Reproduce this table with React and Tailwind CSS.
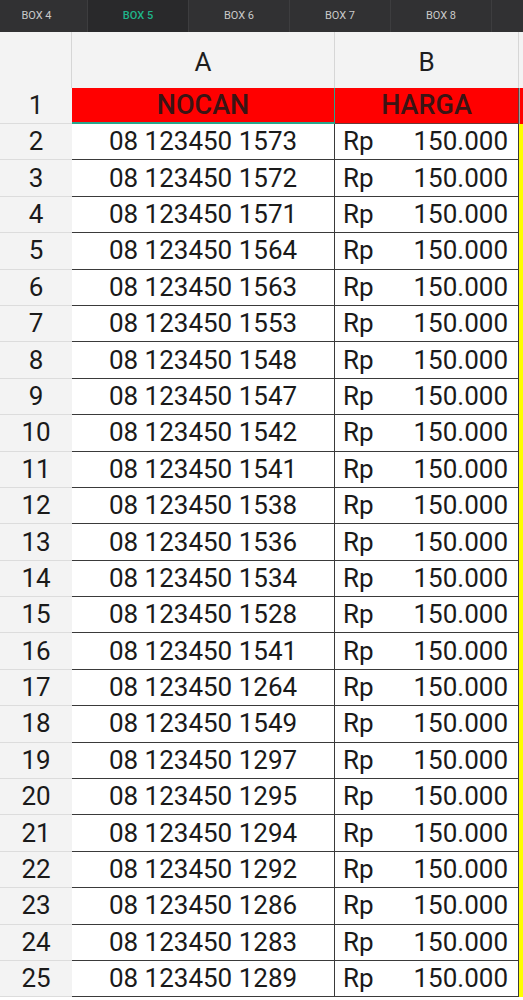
import React from 'react';

const tabs = ['BOX 4', 'BOX 5', 'BOX 6', 'BOX 7', 'BOX 8'];

const numbers = [
  '1573', '1572', '1571', '1564', '1563', '1553', '1548', '1547', '1542', '1541', '1538', '1536',
  '1534', '1528', '1541', '1264', '1549', '1297', '1295', '1294', '1292', '1286', '1283', '1289',
];

const App = () => {
  return (
    <div className="w-[523px] h-[1000px] overflow-hidden bg-white" style={{ fontFamily: 'Roboto, "Liberation Sans", sans-serif' }}>
      {/* sheet tabs */}
      <div className="flex h-[32px] bg-[#313133] text-[11px] text-[#c9c9c9]">
        {tabs.map((t, i) => (
          <div
            key={t}
            className={`flex items-center justify-center border-r border-[#3d3d3f] ${i === 0 ? 'w-[88px] pr-[14px]' : 'w-[101px]'} ${i === 1 ? 'bg-[#29292b] text-[#1fb58a] font-medium' : ''}`}
          >
            {t}
          </div>
        ))}
        <div className="flex-1" />
      </div>

      {/* column headers */}
      <div className="flex h-[56px] bg-[#f3f3f3] text-[26px] text-[#1e1e1e]">
        <div className="w-[72px] border-r border-[#d6d6d6]" />
        <div className="w-[263px] flex items-center justify-center border-r border-[#d6d6d6] pt-1">A</div>
        <div className="w-[184px] flex items-center justify-center border-r border-[#d6d6d6] pt-1">B</div>
        <div className="flex-1" />
      </div>

      {/* row 1 */}
      <div className="flex h-[36px] text-[27px]">
        <div className="w-[72px] bg-[#f3f3f3] flex items-center justify-center border-b border-[#dcdcdc] text-[#1e1e1e] text-[26px]">1</div>
        <div className="w-[263px] bg-[#ff0000] flex items-center justify-center border-b-2 border-r border-[#2aa58c] text-[#3a1414] font-medium">NOCAN</div>
        <div className="w-[184px] bg-[#ff0000] flex items-center justify-center border-b border-r border-[#6b3a3a] text-[#3a1414] font-medium">HARGA</div>
        <div className="flex-1 bg-[#ff0000] border-l border-[#9a9a9a]" />
      </div>

      {numbers.map((n, i) => (
        <div key={i} className="flex h-[36.4px] text-[26px] text-[#1a1a1a]">
          <div className="w-[72px] bg-[#f3f3f3] flex items-center justify-center border-b border-[#dcdcdc]">{i + 2}</div>
          <div className="w-[263px] flex items-center justify-center border-b border-r border-[#3a3a3a]">08 123450 {n}</div>
          <div className="w-[184px] flex items-center justify-between pl-[8px] pr-[10px] border-b border-r border-[#3a3a3a]">
            <span>Rp</span>
            <span>150.000</span>
          </div>
          <div className="flex-1 bg-[#ffff00]" />
        </div>
      ))}
    </div>
  );
};

export default App;
